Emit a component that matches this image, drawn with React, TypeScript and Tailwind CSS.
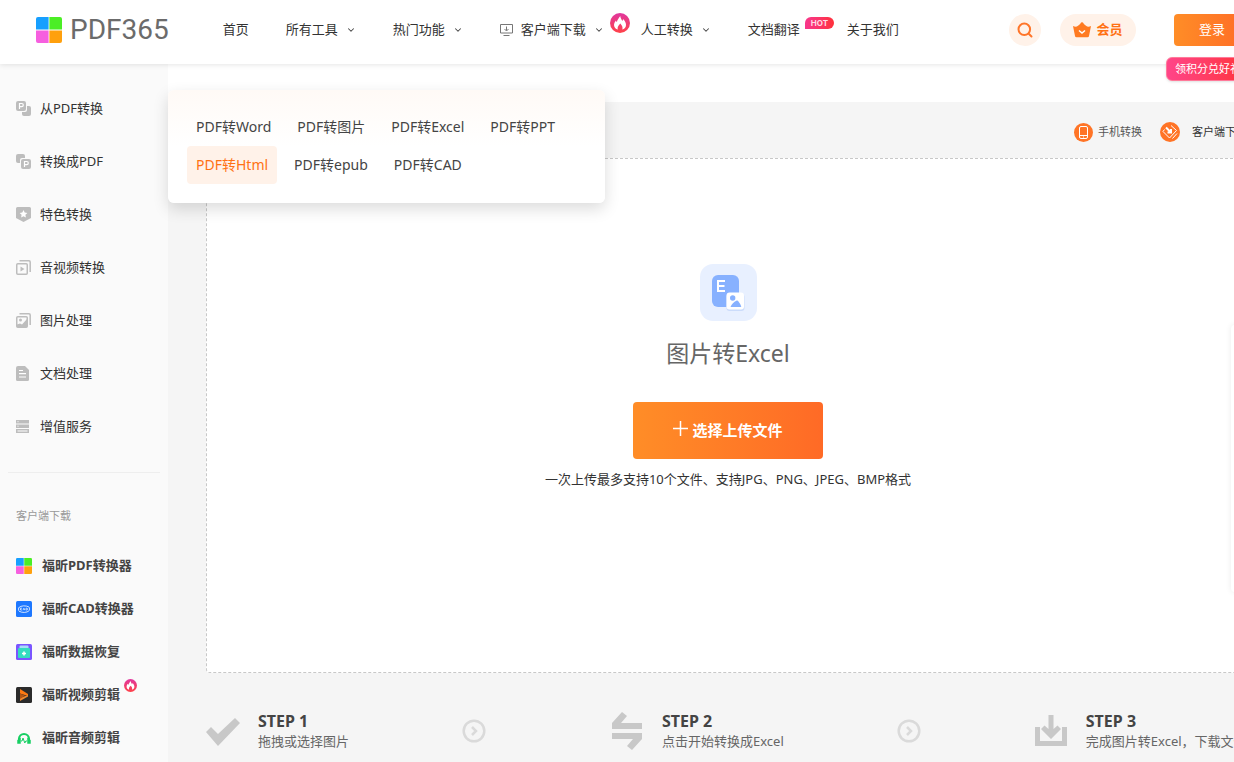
import type { ReactNode } from "react";
import { ChevronDown } from "lucide-react";

const FireBadge = ({ className }: { className: string }) => (
    <svg viewBox="0 0 20 20" className={className}>
        <defs>
            <linearGradient id="fire" x1="0" y1="0" x2="0" y2="1">
                <stop offset="0" stopColor="#e0379f" />
                <stop offset="1" stopColor="#ff4248" />
            </linearGradient>
        </defs>
        <circle cx="10" cy="10" r="10" fill="url(#fire)" />
        <path d="M10.2 3c.4 2.600 1.700 3.700 2 5 .7-.5.800-1.300.800-1.900 1.800 1.600 3 3.600 3 5.800 0 2.500-1.600 4.100-3.800 4.600.8-1.700.3-3.600-1.900-6-2.400 2.300-3.200 4.200-2.400 6C5.600 16 4 14.300 4 12c0-1.900 1-3.400 2-4.600.1.800.4 1.300.9 1.600C7.400 6.600 8.800 5.200 10.200 3z" fill="#fff" />
    </svg>
);

const FourColors = ({ className }: { className: string }) => (
    <svg viewBox="0 0 26 26" className={className}>
        <path d="M2 0h10.600v12.600H0V2a2 2 0 0 1 2-2z" fill="#179fff" />
        <path d="M13.400 0H24a2 2 0 0 1 2 2v10.600H13.400z" fill="#4bee25" />
        <path d="M0 13.400h12.600V26H2a2 2 0 0 1-2-2z" fill="#f65fdf" />
        <path d="M13.400 13.400H26V24a2 2 0 0 1-2 2H13.400z" fill="#ffa00d" />
    </svg>
);

const DownloadScreen = () => (
    <svg viewBox="0 0 13 12" className="mr-2 h-3 w-[13px]" fill="none" stroke="#777">
        <path d="M.5.500h12v8.500H.5zM3.500 11.500h6M6.500 2.500v4M4.500 5l2 2 2-2" />
    </svg>
);

const navItems = [
    { name: "首页" },
    { name: "所有工具", arrow: true },
    { name: "热门功能", arrow: true },
    { name: "客户端下载", arrow: true, icon: <DownloadScreen />, badge: "fire" },
    { name: "人工转换", arrow: true },
    { name: "文档翻译", badge: "hot" },
    { name: "关于我们", wide: true },
];

const categories: { name: string; icon: ReactNode }[] = [
    {
        name: "从PDF转换",
        icon: (
            <>
                <path d="M11 5h2a2 2 0 0 1 2 2v6a2 2 0 0 1-2 2H8a2 2 0 0 1-2-2v-2h3a2 2 0 0 0 2-2z" />
                <rect width="10" height="10" rx="2" />
                <path d="M3.500 8V2.500h2.200a1.500 1.500 0 0 1 0 3.200H3.500" fill="none" stroke="#fff" strokeWidth="1.200" />
            </>
        ),
    },
    {
        name: "转换成PDF",
        icon: (
            <>
                <path d="M2 0h5a2 2 0 0 1 2 2v2H6a2 2 0 0 0-2 2v3H2a2 2 0 0 1-2-2V2a2 2 0 0 1 2-2z" />
                <rect x="5" y="5" width="10" height="10" rx="2" />
                <path d="M8.500 13V7.500h2.200a1.500 1.500 0 0 1 0 3.200H8.500" fill="none" stroke="#fff" strokeWidth="1.200" />
            </>
        ),
    },
    {
        name: "特色转换",
        icon: (
            <>
                <path d="M1.500 0h12A1.500 1.500 0 0 1 15 1.500V11l-7.500 4L0 11V1.500A1.500 1.500 0 0 1 1.500 0z" />
                <path d="m7.500 3 1.200 2.500 2.700.4-2 1.900.5 2.700-2.400-1.300-2.400 1.300.5-2.700-2-1.900 2.700-.4z" fill="#fff" />
            </>
        ),
    },
    {
        name: "音视频转换",
        icon: (
            <>
                <rect x=".75" y="3.750" width="10.500" height="10.500" rx="1" fill="none" stroke="#bdbdbd" strokeWidth="1.500" />
                <path d="M3.500.8H13a1.200 1.200 0 0 1 1.200 1.200v10" fill="none" stroke="#bdbdbd" strokeWidth="1.500" />
                <path d="m4.500 6.500 4 2.500-4 2.500z" />
            </>
        ),
    },
    {
        name: "图片处理",
        icon: (
            <>
                <rect x=".75" y="3.750" width="10.500" height="10.500" rx="1" fill="none" stroke="#bdbdbd" strokeWidth="1.500" />
                <path d="M3.500.8H13a1.200 1.200 0 0 1 1.200 1.200v10" fill="none" stroke="#bdbdbd" strokeWidth="1.500" />
                <path d="m1 11.500 3-1 2 1L11 6v8H1z" />
                <circle cx="4.500" cy="7" r="1.500" />
            </>
        ),
    },
    {
        name: "文档处理",
        icon: (
            <>
                <path d="M2 0h7l4 4v9.500a1.500 1.500 0 0 1-1.500 1.500h-10A1.500 1.500 0 0 1 0 13.500V2a2 2 0 0 1 2-2z" />
                <path d="M3 4.500h4M3 7.700h7M3 11h7" stroke="#fff" strokeWidth="1.200" />
            </>
        ),
    },
    {
        name: "增值服务",
        icon: (
            <>
                <path d="M0 1h13v3.500H0zM0 5.500h13V9H0zM0 10h13v4H0z" />
                <path d="M1.500 2.700h1M1.500 7.200h1M1.500 12h10" stroke="#fff" />
            </>
        ),
    },
];

const clients: { name: string; fire?: boolean; icon: ReactNode }[] = [
    { name: "福昕PDF转换器", icon: <FourColors className="size-4" /> },
    {
        name: "福昕CAD转换器",
        icon: (
            <svg viewBox="0 0 16 16" className="size-4">
                <rect width="16" height="16" rx="1.500" fill="#1e78ff" />
                <path d="M3 6.500C5 4.500 10 4.300 13 6M13 9.800c-2 2-7 2.200-10 .4M2.600 6.500v3.200M13.400 6.300v3.200" fill="none" stroke="#fff" strokeWidth=".8" />
                <path d="M6 7.200H4.500v1.800H6M7 9.200l.9-2 .9 2M10 7.200v1.800h.7a.9.900 0 0 0 0-1.800z" fill="none" stroke="#fff" strokeWidth=".7" />
            </svg>
        ),
    },
    {
        name: "福昕数据恢复",
        icon: (
            <svg viewBox="0 0 16 16" className="size-4">
                <rect width="16" height="16" rx="1.500" fill="#7a55ff" />
                <rect x="3.500" y="1.500" width="9" height="5" rx="1" fill="#a8dcf8" />
                <rect x="2" y="4" width="12" height="10" rx="1" fill="#35dcc0" />
                <path d="M8 7.500v4M6 9.500h4" stroke="#fff" strokeWidth="1.500" />
            </svg>
        ),
    },
    {
        name: "福昕视频剪辑",
        fire: true,
        icon: (
            <svg viewBox="0 0 16 16" className="size-4">
                <rect width="16" height="16" rx="1.500" fill="#2b2b2b" />
                <path d="M4 2 12 7v2L4 6.500z" fill="#ff7a12" />
                <path d="M12 8v1.500L4 14v-3z" fill="#ef8a2f" />
                <path d="m4 6.500 5 2L4 12z" fill="#b45513" />
            </svg>
        ),
    },
    {
        name: "福昕音频剪辑",
        icon: (
            <svg viewBox="0 0 16 16" className="size-4" fill="none" stroke="#17cf63">
                <path d="M3 11V9a5 5 0 0 1 10 0v2" strokeWidth="2.200" />
                <path d="M2 13v-2.500l2-1.500v4zM14 13v-2.500L12 9v4z" fill="#17cf63" strokeWidth="1.500" />
                <path d="M5 11h1l1-3 1.800 5 1-2H11" />
            </svg>
        ),
    },
];

const formats = [
    ["PDF转Word", "PDF转图片", "PDF转Excel", "PDF转PPT"],
    ["PDF转Html", "PDF转epub", "PDF转CAD"],
];

const Header = () => (
    <header className="relative z-20 flex h-16 items-center bg-white pr-[38px] pb-1 pl-9 shadow-[0_1px_5px_rgba(0,0,0,0.1)]">
        <a href="#" className="flex items-center gap-2">
            <FourColors className="size-[26px]" />
            <span className="font-[Roboto] text-[28px] leading-8 text-[#6b6b6b]">PDF365</span>
        </a>
        <nav className="ml-[54px] flex items-center gap-[37px]">
            {navItems.map((item) => (
                <a key={item.name} href="#" className={item.wide ? "relative ml-[10px] flex items-center" : "relative flex items-center"}>
                    {item.icon}
                    {item.name}
                    {item.arrow && <ChevronDown className="ml-2 size-[10px] text-[#444]" strokeWidth={2.500} />}
                    {item.badge === "fire" && <FireBadge className="absolute -top-[7px] -right-[26px] size-5" />}
                    {item.badge === "hot" && (
                        <span className="absolute -top-[3px] left-[57px] rounded-t-full rounded-br-full bg-linear-to-r from-[#f8368c] to-[#ff3038] px-[6px] font-[Inter] text-[8px] leading-3 font-bold text-[#ffd9e4]">
                            HOT
                        </span>
                    )}
                </a>
            ))}
        </nav>
        <div className="ml-auto flex items-center">
            <button aria-label="搜索" className="flex size-8 items-center justify-center rounded-full bg-[#fff2e9]">
                <svg viewBox="0 0 16 16" className="size-4" fill="none" stroke="#ff7529" strokeWidth="2" strokeLinecap="round">
                    <circle cx="7.300" cy="7.300" r="5.800" />
                    <path d="m12 12 2.500 2.500" />
                </svg>
            </button>
            <button className="ml-[19px] flex h-8 w-[76px] items-center justify-center gap-[5px] rounded-full bg-[#fff2e9] font-bold text-[#ff7113]">
                <svg viewBox="0 0 18 16" className="h-4 w-[18px]">
                    <path d="M0 4c2 .9 3.500.9 5-.2L9 .5l4 3.300c1.500 1.100 3 1.100 5 .2L16 14a1.500 1.500 0 0 1-1.500 1.300h-11A1.500 1.500 0 0 1 2 14z" fill="#ff7b22" />
                    <circle cx="9" cy="1.700" r="1.500" fill="#ff7b22" />
                    <path d="m6 8.500 3 2.500 3-2.500" fill="none" stroke="#fff" strokeWidth="1.500" />
                </svg>
                会员
            </button>
            <div className="relative ml-[38px]">
                <button className="h-8 w-[76px] rounded bg-linear-to-r from-[#ff8d27] to-[#ff6a26] text-white">登录</button>
                <a href="#" className="absolute top-[43px] -left-2 rounded-md border border-[#ff7999] bg-linear-to-r from-[#ff4488] to-[#ff3232] px-2 text-[11px] leading-[22px] whitespace-nowrap text-white shadow">
                    领积分兑好礼
                </a>
            </div>
        </div>
    </header>
);

const Sidebar = () => (
    <aside className="w-[168px] shrink-0 bg-[#fafafa] pt-[18px]">
        <ul>
            {categories.map((c) => (
                <li key={c.name}>
                    <a href="#" className="flex h-[53px] items-center gap-[9px] pl-4">
                        <svg viewBox="0 0 15 15" className="size-[15px]" fill="#bdbdbd">{c.icon}</svg>
                        {c.name}
                    </a>
                </li>
            ))}
        </ul>
        <hr className="mx-2 mt-[19px] border-[#eee]" />
        <h3 className="mt-[33px] pl-4 text-[11px] leading-5 text-[#999]">客户端下载</h3>
        <ul className="mt-[18px] font-bold text-[#444]">
            {clients.map((c) => (
                <li key={c.name}>
                    <a href="#" className="flex h-[43px] items-center gap-[10px] pl-4">
                        {c.icon}
                        <span className="relative">
                            {c.name}
                            {c.fire && <FireBadge className="absolute -top-[6px] -right-[17px] size-[13px]" />}
                        </span>
                    </a>
                </li>
            ))}
        </ul>
    </aside>
);

const FormatMenu = () => (
    <div className="absolute top-[26px] left-0 z-10 w-[437px] rounded-md bg-linear-to-b from-[#fffaf6] via-white to-white px-[19px] pt-[18px] pb-[19px] text-sm text-[#444] shadow-[0_6px_16px_rgba(0,0,0,0.14)]">
        {formats.map((row) => (
            <div key={row[0]} className="flex gap-2">
                {row.map((f) => (
                    <a
                        key={f}
                        href="#"
                        className={f === "PDF转Html" ? "rounded bg-[#fff2e9] px-[9px] leading-[38px] text-[#ff7113]" : "px-[9px] leading-[38px]"}
                    >
                        {f}
                    </a>
                ))}
            </div>
        ))}
    </div>
);

const StepArrow = () => (
    <svg viewBox="0 0 24 24" className="size-6 shrink-0" fill="none" stroke="#dadada">
        <circle cx="12" cy="12" r="10.300" strokeWidth="2.500" />
        <path d="m10 8 4 4-4 4" strokeWidth="2.500" />
    </svg>
);

interface StepProps {
    title: string;
    text: string;
    children: ReactNode;
}

const Step = ({ title, text, children }: StepProps) => (
    <div className="flex shrink-0 items-center gap-[18px]">
        <svg viewBox="0 0 34 40" className="h-10 w-[34px]" fill="#c8c8c8">{children}</svg>
        <div className="whitespace-nowrap">
            <h4 className="text-base leading-5 font-bold text-[#444]">{title}</h4>
            <p className="leading-5 text-[#666]">{text}</p>
        </div>
    </div>
);

const Converter = () => (
    <section className="flex-1 bg-[#f5f5f5] px-[38px]">
        <div className="flex h-14 items-center justify-end pt-1 pr-[3px] text-[11px]">
            <a href="#" className="flex items-center gap-[5px] text-[#555]">
                <svg viewBox="0 0 19 19" className="size-[19px]">
                    <circle cx="9.500" cy="9.500" r="9.500" fill="#ff7426" />
                    <rect x="5.500" y="3.500" width="8" height="12" rx="1.500" fill="none" stroke="#fff" />
                    <path d="M5.500 12.500h8M9 14h1" stroke="#fff" />
                </svg>
                手机转换
            </a>
            <a href="#" className="ml-[18px] flex items-center gap-3">
                <svg viewBox="0 0 20 20" className="size-5" fill="none" stroke="#fff">
                    <circle cx="10" cy="10" r="10" fill="#ff7426" stroke="none" />
                    <path d="M4.500 7.500 3 9.500l6.500 6.500 7-7.500L11 3.500M12.500 16.500l4.500-5" />
                    <path d="m6 5.500 4 4M11 7v3.500H7.500" strokeWidth="2" />
                </svg>
                客户端下载
            </a>
        </div>
        <div className="flex h-[515px] flex-col items-center rounded border border-dashed border-[#c8c8c8] bg-white pt-[105px]">
            <svg viewBox="0 0 57 57" className="size-[57px]">
                <rect width="57" height="57" rx="13" fill="#e8f0ff" />
                <rect x="12" y="11" width="27" height="32" rx="6" fill="#87b1ff" />
                <path d="M25 17h-7v10h7M18 22h6.500" fill="none" stroke="#fff" strokeWidth="2" />
                <rect x="26.500" y="30" width="18" height="17" rx="3" fill="#cbdcfb" />
                <rect x="26.500" y="28.500" width="17.500" height="17" rx="3" fill="#fff" />
                <circle cx="32.700" cy="34" r="2.700" fill="#87b1ff" />
                <path d="M30.500 43c1-3 3.500-5 5.800-6.200.8-.4 1.500-.3 2 .4 1.500 2 2.600 3.600 3 5.800z" fill="#87b1ff" />
            </svg>
            <h1 className="mt-[15px] text-[23px] leading-[34px] text-[#666]">图片转Excel</h1>
            <button className="mt-8 flex h-[57px] w-[190px] items-center justify-center gap-1 rounded bg-linear-to-r from-[#ff8d27] to-[#ff6a26] text-[15px] font-bold text-white">
                <svg viewBox="0 0 15 15" className="mb-1 size-[15px]" stroke="#fff" strokeWidth="1.500">
                    <path d="M7.500 0v15M0 7.500h15" />
                </svg>
                选择上传文件
            </button>
            <p className="mt-[10px] leading-5">一次上传最多支持10个文件、支持JPG、PNG、JPEG、BMP格式</p>
        </div>
        <div className="flex items-center gap-[113px] pt-[38px] pb-[11px]">
            <Step title="STEP 1" text="拖拽或选择图片">
                <path d="m0 21 5-5 7 7L29 7l5 5-22 23z" />
            </Step>
            <StepArrow />
            <div className="ml-[11px]">
                <Step title="STEP 2" text="点击开始转换成Excel">
                    <path d="M32 18H2v-6L12 1l5 4-6 7h21zM2 22h30v6L22 39l-5-4 6-7H2z" />
                </Step>
            </div>
            <StepArrow />
            <Step title="STEP 3" text="完成图片转Excel，下载文件">
                <path d="M1 16h5v14h22V16h5v19H1z" />
                <path d="M14.500 4h5v14l4-3.500 3.500 3.500L17 28 7 18l3.500-3.500 4 3.500z" />
            </Step>
        </div>
    </section>
);

export default function App() {
    return (
        <div className="relative min-h-screen overflow-hidden bg-white font-['Noto_Sans','Noto_Sans_CJK_SC',sans-serif] text-[13px] text-[#333]">
            <div className="flex min-h-screen min-w-[1288px] flex-col">
                <Header />
                <div className="flex flex-1">
                    <Sidebar />
                    <main className="relative flex flex-1 flex-col pt-[38px]">
                        <FormatMenu />
                        <Converter />
                    </main>
                </div>
            </div>
            <div className="absolute top-[325px] -right-[57px] h-[267px] w-[60px] rounded bg-white shadow-[0_0_6px_rgba(0,0,0,0.08)]" />
        </div>
    );
}
